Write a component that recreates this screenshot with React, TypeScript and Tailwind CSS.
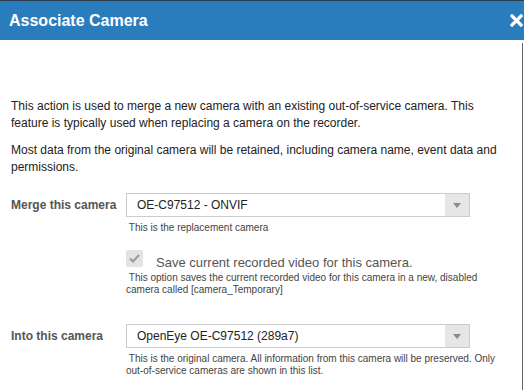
import React from "react";

function SelectBox({ value }: { value: string }) {
  return (
    <div className="flex h-[24px] w-[344px] items-stretch border border-[#cccccc] bg-white">
      <div className="flex flex-1 items-center pl-[10px] text-[12px] text-[#222222]">{value}</div>
      <div className="flex w-[24px] items-center justify-center bg-[#e6e6e6]">
        <svg width="8" height="5" viewBox="0 0 8 5">
          <path d="M0 0 H8 L4 5 Z" fill="#8a8a8a" />
        </svg>
      </div>
    </div>
  );
}

function Help({ children }: { children: React.ReactNode }) {
  return <div className="w-[384px] text-[10px] leading-[12px] text-[#444444]">{children}</div>;
}

export default function App() {
  return (
    <div
      className="relative h-[390px] w-[524px] overflow-hidden bg-white"
      style={{ fontFamily: '"Liberation Sans", Arial, sans-serif' }}
    >
      <div className="flex h-[40px] items-center justify-between border-t border-[#2d3e50] bg-[#2a7dbd] pl-[9px] pr-[1px]">
        <div className="pt-[1px] text-[16px] font-bold text-white">Associate Camera</div>
        <svg width="13" height="13" viewBox="0 0 13 13">
          <path d="M2 2 L11 11 M11 2 L2 11" stroke="white" strokeWidth="3.2" strokeLinecap="square" />
        </svg>
      </div>
      <div className="absolute bottom-0 right-[1px] top-[43px] w-px bg-[#666666]" />

      <div className="pl-[11px] pr-[20px] pt-[58px] text-[12px] leading-[17px] text-[#222222]">
        <p>
          This action is used to merge a new camera with an existing out-of-service camera. This feature is
          typically used when replacing a camera on the recorder.
        </p>
        <p className="mt-[10px]">
          Most data from the original camera will be retained, including camera name, event data and
          permissions.
        </p>

        <div className="mt-[17px] flex">
          <div className="flex h-[24px] w-[115px] shrink-0 items-center text-[12px] font-bold text-[#555555]">
            Merge this camera
          </div>
          <div className="flex flex-col">
            <SelectBox value="OE-C97512 - ONVIF" />
            <div className="mt-[5px]">
              <Help>&nbsp;This is the replacement camera</Help>
            </div>
            <div className="mt-[16px] flex items-start">
              <div className="flex h-[17px] w-[17px] items-center justify-center rounded-[2px] bg-[#e3e3e3]">
                <svg width="11" height="9" viewBox="0 0 11 9">
                  <path d="M1 4.5 L4 7.5 L10 1" fill="none" stroke="#9a9a9a" strokeWidth="2" />
                </svg>
              </div>
              <div className="ml-[13px] mt-[5px] text-[13px] leading-[16px] text-[#555555]">
                Save current recorded video for this camera.
              </div>
            </div>
            <div className="mt-[1px]">
              <Help>
                &nbsp;This option saves the current recorded video for this camera in a new, disabled camera
                called [camera_Temporary]
              </Help>
            </div>
          </div>
        </div>

        <div className="mt-[28px] flex">
          <div className="flex h-[24px] w-[115px] shrink-0 items-center text-[12px] font-bold text-[#555555]">
            Into this camera
          </div>
          <div className="flex flex-col">
            <SelectBox value="OpenEye OE-C97512 (289a7)" />
            <div className="mt-[5px]">
              <Help>
                &nbsp;This is the original camera. All information from this camera will be preserved. Only
                out-of-service cameras are shown in this list.
              </Help>
            </div>
          </div>
        </div>
      </div>
    </div>
  );
}
